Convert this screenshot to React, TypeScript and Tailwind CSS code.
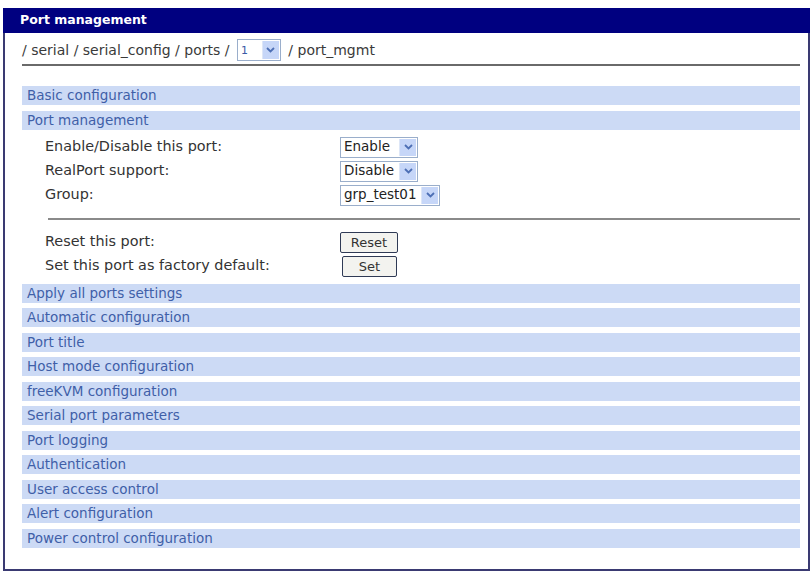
import React from 'react'

const font = { fontFamily: '"DejaVu Sans", Verdana, sans-serif' }

const sectionsAfter = [
  'Apply all ports settings',
  'Automatic configuration',
  'Port title',
  'Host mode configuration',
  'freeKVM configuration',
  'Serial port parameters',
  'Port logging',
  'Authentication',
  'User access control',
  'Alert configuration',
  'Power control configuration',
]

function Arrow() {
  return (
    <span className="flex h-full w-[17px] items-center justify-center border-l border-[#dde6f7] bg-[#c6d6f8]">
      <svg width="9" height="6" viewBox="0 0 9 6" aria-hidden>
        <path d="M1 1 L4.5 4.5 L8 1" fill="none" stroke="#4d6fb5" strokeWidth="1.8" />
      </svg>
    </span>
  )
}

function FakeSelect({ value, width }: { value: string; width: string }) {
  return (
    <div className={`flex h-[21px] items-center border border-[#9aaecb] bg-white pl-[3px] pr-[1px] py-[1px] ${width}`}>
      <span className="flex-1 text-[13.5px] leading-none text-[#222]">{value}</span>
      <Arrow />
    </div>
  )
}

function SectionRow({ label }: { label: string }) {
  return (
    <div className="flex h-[19px] items-center bg-[#ccdaf5] pl-[5px] text-[13.5px] text-[#3f5fa8]">{label}</div>
  )
}

function FormRow({ label, children }: { label: string; children: React.ReactNode }) {
  return (
    <div className="flex h-[24px] items-center">
      <span className="w-[318px] pl-[23px] text-[14.4px] text-[#333]">{label}</span>
      {children}
    </div>
  )
}

export default function App() {
  return (
    <div className="h-[573px] w-[812px] bg-white pl-[3px] pt-[8px]" style={font}>
      <div className="w-[807px]">
        <div className="flex h-[25px] items-center bg-[#000080] pl-[17px] text-[12.5px] font-bold text-white">
          Port management
        </div>
        <div className="h-[538px] border-x-2 border-b-2 border-[#3a3a72] pl-[17px] pr-[8px]">
          <div className="flex items-center border-b-2 border-[#6a6a6a] pb-[3px] pt-[6px] text-[14px] text-[#3a3a3a]">
            <span>/ serial / serial_config / ports /&nbsp;</span>
            <div className="mx-[3px] flex h-[22px] w-[44px] items-center border border-[#9aaecb] bg-white pl-[3px] pr-[1px] py-[1px]">
              <span className="flex-1 text-[11px] leading-none text-[#3b5aa6]">1</span>
              <Arrow />
            </div>
            <span>&nbsp;/ port_mgmt</span>
          </div>

          <div className="mt-[20px] flex flex-col gap-[5.5px]">
            <SectionRow label="Basic configuration" />
            <SectionRow label="Port management" />
            <div>
              <FormRow label="Enable/Disable this port:">
                <FakeSelect value="Enable" width="w-[78px]" />
              </FormRow>
              <FormRow label="RealPort support:">
                <FakeSelect value="Disable" width="w-[78px]" />
              </FormRow>
              <FormRow label="Group:">
                <FakeSelect value="grp_test01" width="w-[100px]" />
              </FormRow>
              <div className="ml-[26px] mt-[11px] border-t-2 border-[#8a8a8a]" />
              <div className="mt-[10px]">
                <FormRow label="Reset this port:">
                  <button className="h-[21px] w-[58px] rounded-[2px] border border-[#2f3a55] bg-[#f3f3ef] text-[13px] text-[#333]">
                    Reset
                  </button>
                </FormRow>
                <FormRow label="Set this port as factory default:">
                  <button className="ml-[2px] h-[21px] w-[55px] rounded-[2px] border border-[#2f3a55] bg-[#f3f3ef] text-[13px] text-[#333]">
                    Set
                  </button>
                </FormRow>
              </div>
            </div>
            {sectionsAfter.map((s) => (
              <SectionRow key={s} label={s} />
            ))}
          </div>
        </div>
      </div>
    </div>
  )
}
